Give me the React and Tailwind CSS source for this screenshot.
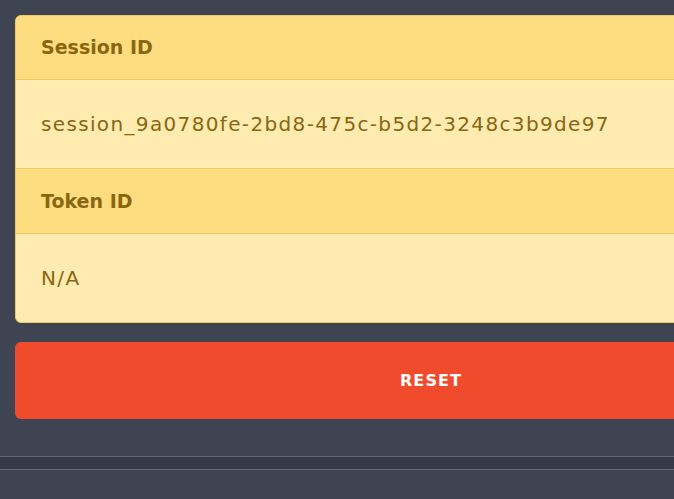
const rows = [
  { label: "Session ID", value: "session_9a0780fe-2bd8-475c-b5d2-3248c3b9de97" },
  { label: "Token ID", value: "N/A" },
];

const App = () => {
  return (
    <div
      className="min-h-[499px] w-full overflow-hidden bg-[#3e4452]"
      style={{ fontFamily: "'DejaVu Sans', 'Noto Sans', sans-serif" }}
    >
      <div className="w-[847px] pt-[15px] pl-[15px]">
        <div className="overflow-hidden rounded-md border border-[#edc95e] bg-[#feebb0]">
          {rows.map((r, i) => (
            <div key={r.label}>
              <div
                className={`flex items-center border-b border-[#edc95e] bg-[#fddd80] px-[25px] text-[19px] font-semibold text-[#8a6611] ${
                  i > 0 ? "h-[66px] border-t" : "h-[64px]"
                }`}
              >
                {r.label}
              </div>
              <div className="flex h-[88px] items-center px-[25px] text-[20px] tracking-[1.35px] text-[#8a6611]">
                {r.value}
              </div>
            </div>
          ))}
        </div>
        <button className="mt-[19px] flex h-[77px] w-full items-center justify-center rounded-md bg-[#ef4b2c] text-[16px] font-semibold tracking-[0.07em] text-white">
          RESET
        </button>
      </div>
      <div className="mt-[37px] h-[14px] border-y border-[#5f6a7a] bg-[#343a48]" />
    </div>
  );
};

export default App;
